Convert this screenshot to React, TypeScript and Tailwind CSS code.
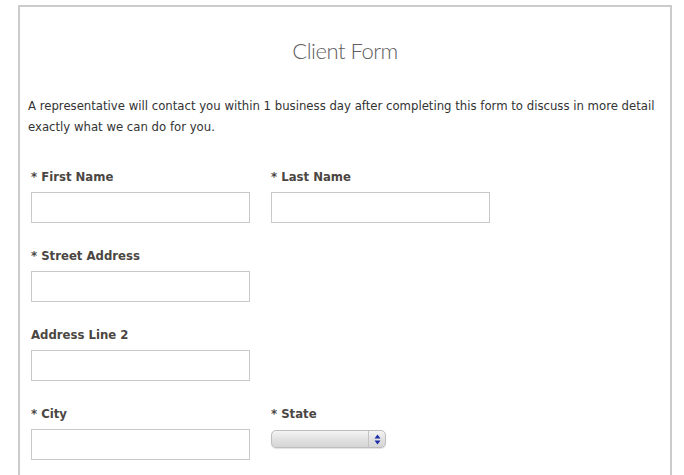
import React from "react";

const Label = ({ children }: { children: React.ReactNode }) => (
  <div className="h-[17px] pt-px text-[13px] leading-4 font-bold text-[#4b4642] whitespace-nowrap">
    {children}
  </div>
);

const Input = () => (
  <div className="mt-[7px] w-[219px] h-[31px] border border-[#c9c9c9] bg-white" />
);

const Field = ({ label }: { label: string }) => (
  <div className="flex flex-col w-[219px]">
    <Label>{label}</Label>
    <Input />
  </div>
);

const Select = () => (
  <div className="mt-[8px] w-[115px] h-[18px] rounded-[5px] border border-[#bdbdbd] bg-gradient-to-b from-[#f4f4f4] via-[#e2e2e2] to-[#d6d6d6] flex justify-end shadow-[0_1px_1px_rgba(0,0,0,0.12)]">
    <div className="w-[17px] h-full border-l border-[#c4c4c4] flex items-center justify-center">
      <svg width="7" height="11" viewBox="0 0 7 11">
        <path d="M3.5 0.5 L6.5 4.5 L0.5 4.5 Z" fill="#1c2fa8" />
        <path d="M3.5 10.5 L6.5 6.5 L0.5 6.5 Z" fill="#1c2fa8" />
      </svg>
    </div>
  </div>
);

export default function App() {
  return (
    <div
      className="w-[684px] h-[475px] overflow-hidden bg-white pt-[5px] pl-[18px]"
      style={{ fontFamily: '"DejaVu Sans Condensed", "DejaVu Sans", sans-serif' }}
    >
      <div className="w-[654px] h-[500px] border-2 border-[#cccccc] pt-[30px]">
        <h1
          className="text-center text-[22px] leading-[28px] font-light tracking-[-0.5px] text-[#5e5e5e]"
          style={{ fontFamily: 'Lato, "Open Sans", sans-serif' }}
        >
          Client Form
        </h1>
        <p className="mt-[30px] ml-[8px] mr-[10px] text-[13px] leading-[21px] text-[#333333]">
          A representative will contact you within 1 business day after completing this form to discuss in more detail exactly what we can do for you.
        </p>
        <div className="mt-[31px] ml-[11px] flex flex-col gap-6">
          <div className="flex gap-[21px]">
            <Field label="* First Name" />
            <Field label="* Last Name" />
          </div>
          <Field label="* Street Address" />
          <Field label="Address Line 2" />
          <div className="flex gap-[21px]">
            <Field label="* City" />
            <div className="flex flex-col">
              <Label>* State</Label>
              <Select />
            </div>
          </div>
        </div>
      </div>
    </div>
  );
}
